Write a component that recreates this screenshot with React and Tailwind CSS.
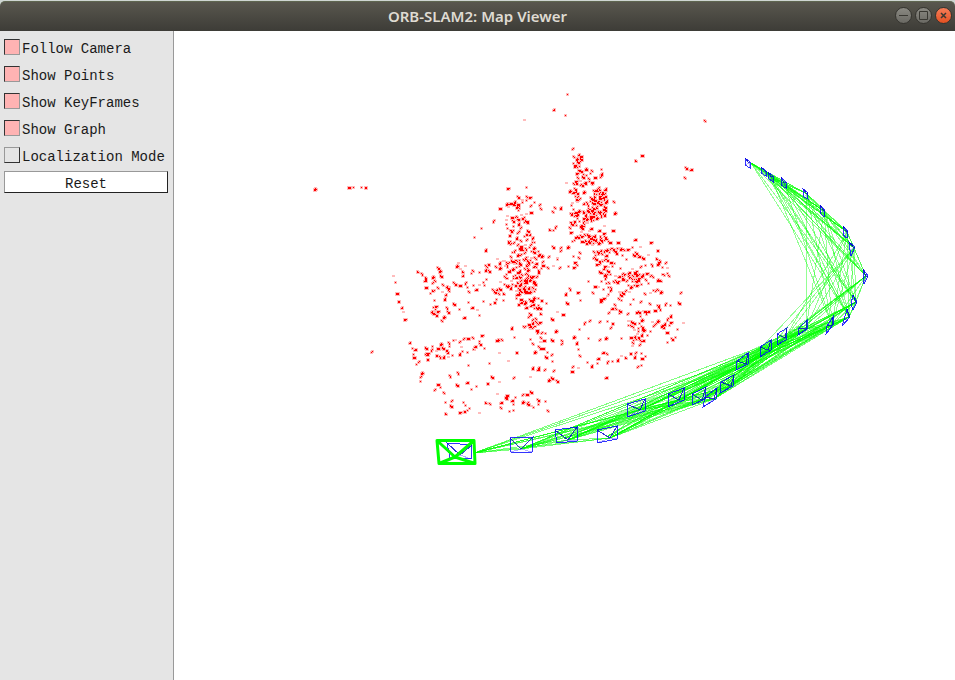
import React, { useState } from "react";

// Small repeatable generator so that the cloud looks the same on each render.
function makeRandom(seed) {
  let s = seed;
  return () => {
    s = (s * 1664525 + 1013904223) % 4294967296;
    return s / 4294967296;
  };
}

// Isolated landmarks, x and y in turn.
const LANDMARKS = [
  393,276,395,282,397,293,398,301,402,307,403,312,404,319,417,271,422,274,425,280,426,287,432,277,432,283,
  434,290,430,293,434,300,433,307,435,312,436,315,442,321,443,317,448,312,447,308,454,304,459,309,464,317,
  468,302,472,307,477,310,479,315,483,301,490,304,494,302,496,299,503,300,438,268,439,271,441,276,443,285,
  442,292,449,287,448,290,446,295,444,299,455,284,453,282,456,266,458,263,460,269,463,275,465,266,471,273,
  465,283,467,287,468,291,473,285,476,289,479,285,483,282,484,285,479,272,485,270,487,267,485,250,490,272,
  497,259,499,263,493,290,497,289,507,265,410,342,412,348,415,349,413,354,414,357,418,362,416,364,421,373,
  420,377,420,381,426,348,426,355,427,360,432,346,431,350,436,355,436,351,440,344,440,357,443,348,446,350,
  443,357,449,343,448,357,452,355,455,340,459,354,460,341,461,347,462,351,464,338,468,338,467,352,472,337,
  474,350,475,346,479,341,481,335,480,344,484,348,497,340,501,339,499,353,511,328,514,337,516,352,508,361,
  524,327,468,365,458,373,450,376,489,363,492,377,457,385,467,382,476,386,471,389,487,383,499,382,513,378,
  530,377,533,369,538,369,438,384,440,387,434,390,444,393,445,402,445,413,452,400,451,406,459,412,463,402,
  465,405,469,408,467,410,464,411,479,413,485,402,490,404,497,394,501,402,500,407,505,397,507,398,512,400,
  513,404,509,411,513,410,522,402,523,394,527,394,531,392,528,402,531,406,538,404,548,411,545,401,538,400,
  595,286,598,287,608,287,611,288,604,275,605,278,610,274,601,281,651,275,653,277,657,280,662,274,661,281,
  667,273,668,275,657,289,653,290,645,294,650,293,681,292,679,303,670,305,670,316,667,319,683,323,677,329,
  675,337,672,339,667,342,660,309,655,310,648,311,645,311,643,311,639,312,636,313,607,296,603,298,600,301,
  618,298,621,295,623,293,612,308,615,305,615,308,620,311,628,313,628,321,632,322,628,325,631,326,638,328,
  637,334,635,338,633,343,639,345,632,346,638,337,639,323,652,322,653,326,657,321,661,326,663,325,647,335,
  650,331,612,323,611,327,607,321,621,338,621,356,634,357,642,358,645,356,638,366,641,365,630,353,625,357,
  617,360,612,361,607,362,597,363,591,366,587,362,598,358,606,377,603,352,607,354,599,340,605,338,588,338,
  579,329,584,323,589,321,599,322,573,337,576,343,578,349,580,356,572,367,572,371,578,368,561,340,562,343,
  555,331,552,340,551,355,552,361,554,370,557,381,552,378,548,380,538,368,532,368,534,352,540,348,532,343,
  530,339,538,332,545,333,533,327,532,323,533,319,530,314,524,327,552,319,557,312,546,303,565,294,570,289,
  577,292,580,300,567,303,563,314,593,293,588,281,568,266,573,267,577,265,560,267,553,266,547,267,538,298,
  538,305,540,308,514,337,497,340,573,148,579,154,507,188,526,187,527,197,514,202,500,208,493,221,534,202,
  541,209,539,205,553,212,555,208,560,208,549,229,555,227,553,230,553,247,548,257,613,201,614,213,613,230,
  601,169,601,174,610,242,618,242,610,249,613,249,617,248,620,248,623,249,627,249,632,247,640,247,635,239,
  650,242,622,255,626,259,634,255,638,257,643,258,648,255,656,258,660,261,665,263,641,266,645,265,662,267,
  667,268,620,268,612,266,632,269,614,263,567,94,554,109,565,115,524,120,705,121,314,189,349,187,353,187,
  361,187,365,187,371,352,642,155,635,160,686,168,691,169,685,178,481,228,474,237,544,340,547,352,669,325,
];

// Dense parts of the cloud: centre, half extents, count.
const CLUSTERS = [
  [578, 161, 5, 7, 13], [584, 177, 9, 8, 22], [596, 180, 5, 12, 9], [576, 187, 11, 6, 14],
  [600, 193, 8, 6, 22], [597, 205, 10, 8, 38], [579, 204, 10, 9, 16], [579, 219, 9, 8, 30],
  [597, 216, 8, 5, 18], [581, 235, 14, 8, 26], [598, 237, 8, 11, 22], [599, 256, 7, 8, 16],
  [570, 256, 16, 9, 10], [512, 214, 6, 12, 15], [523, 205, 9, 9, 12], [521, 221, 9, 10, 16],
  [510, 235, 4, 9, 12], [525, 241, 9, 11, 26], [521, 258, 11, 10, 28], [528, 270, 11, 13, 28],
  [511, 269, 9, 10, 20], [520, 284, 10, 10, 28], [531, 283, 7, 10, 15], [525, 299, 9, 9, 22],
  [532, 315, 6, 11, 15], [534, 328, 5, 8, 8], [537, 259, 6, 9, 12], [503, 289, 8, 8, 9],
  [625, 277, 9, 5, 18], [635, 279, 8, 7, 20], [605, 267, 10, 10, 12], [611, 287, 9, 7, 8],
  [636, 293, 16, 12, 10], [649, 275, 18, 13, 10], [613, 249, 15, 7, 8], [643, 257, 16, 8, 5],
  [636, 325, 7, 13, 12], [639, 344, 6, 10, 8], [658, 298, 12, 9, 5], [655, 323, 18, 12, 6],
  [430, 284, 7, 7, 4], [435, 309, 4, 7, 5], [443, 288, 8, 6, 5], [473, 277, 18, 10, 4],
  [498, 270, 14, 12, 8], [432, 353, 8, 6, 4], [462, 346, 15, 7, 4], [610, 312, 12, 22, 3],
  [550, 320, 12, 30, 5], [520, 401, 15, 7, 4], [545, 350, 10, 25, 4], [665, 335, 14, 12, 2],
];

function buildCloud() {
  const rnd = makeRandom(2017);
  const halo = [];
  const core = [];
  const put = (x, y, w, h) => {
    halo.push(`M${x - 1} ${y - 1}h${w + 2}v${h + 2}h-${w + 2}z`);
    core.push(`M${x} ${y}h${w}v${h}h-${w}z`);
  };
  const dot = (x, y) => {
    const kind = rnd();
    if (kind < 0.1) {
      halo.push(`M${x - 1} ${y - 1}h3v2h-3z`);
      return;
    }
    if (kind < 0.38) {
      put(x, y, 1, 1);
      return;
    }
    put(x, y, kind > 0.65 ? 2 : 1, kind > 0.55 ? 2 : 1);
    const dx = rnd() < 0.5 ? -1 : 1;
    const dy = rnd() < 0.5 ? -1 : 1;
    put(x + dx, y + dy, 1, 1);
    if (kind > 0.8) put(x + dx, y, 2, 1);
  };
  for (let i = 0; i < LANDMARKS.length; i += 2) dot(LANDMARKS[i], LANDMARKS[i + 1]);
  for (const [cx, cy, rx, ry, n] of CLUSTERS) {
    for (let i = 0; i < n; i++) {
      dot(Math.round(cx + (rnd() * 2 - 1) * rx), Math.round(cy + (rnd() * 2 - 1) * ry));
    }
  }
  return { halo: halo.join(""), core: core.join("") };
}

// Key frames: top left, top right, bottom right, bottom left, then the optical centre.
const KEYFRAMES = [
  [745,158, 750,162, 750,168, 745,165, 749,163],
  [761,167, 766,171, 766,176, 761,173, 765,171],
  [768,172, 773,176, 773,182, 768,178, 771,177],
  [781,177, 786,182, 786,188, 781,185, 784,183],
  [803,189, 807,192, 808,199, 804,197, 807,194],
  [820,205, 825,210, 824,217, 820,213, 824,211],
  [843,226, 848,231, 847,238, 843,235, 847,232],
  [849,242, 855,247, 851,256, 850,250, 854,248],
  [863,269, 868,276, 864,284, 863,278, 866,276],
  [853,295, 857,302, 853,310, 851,304, 856,302],
  [847,309, 850,317, 842,326, 844,320, 849,317],
  [827,326, 833,317, 833,325, 826,334, 832,325],
  [799,328, 807,320, 807,329, 798,335, 806,329],
  [777,334, 787,328, 786,340, 777,345, 785,338],
  [760,347, 771,340, 771,350, 760,357, 768,350],
  [737,361, 748,353, 748,364, 736,370, 746,364],
  [721,382, 734,375, 733,386, 720,393, 731,386],
  [705,397, 717,388, 716,399, 703,407, 714,399],
  [692,394, 706,387, 705,399, 692,405, 702,400],
  [668,394, 684,388, 684,400, 668,407, 679,400],
  [627,404, 645,399, 645,411, 627,417, 640,410],
  [597,430, 617,426, 617,439, 597,443, 610,438],
  [555,430, 577,427, 577,441, 557,443, 568,440],
  [510,438, 533,437, 532,452, 511,452, 521,449],
  [447,443, 472,445, 471,459, 450,458, 460,455],
];

// Last key frame that each of the first ones shares points with.
const LAST_SHARED = [10, 10, 11, 11, 12, 12, 13, 15, 18];

function buildEdges() {
  const edges = [];
  KEYFRAMES.forEach((a, i) => {
    const last = i < LAST_SHARED.length ? LAST_SHARED[i] : i + 11;
    for (let j = i + 1; j <= Math.min(last, KEYFRAMES.length - 1); j++) {
      const b = KEYFRAMES[j];
      const x2 = j === 24 ? 474 : b[8];
      const y2 = j === 24 ? 453 : b[9];
      edges.push({
        d: `M${i === 0 ? a[8] + 2 : a[8]} ${a[9]}L${x2} ${y2}`,
        opacity: i < 9 && j > 7 ? 0.42 : 0.5,
      });
      if (i >= 11 && j < 23 && (i + j) % 2 === 0) {
        edges.push({ d: `M${a[8] - 3} ${a[9] - 3}L${x2 - 4} ${y2 - 1}`, opacity: 0.35 });
      }
    }
  });
  return edges;
}

const CLOUD = buildCloud();
const EDGES = buildEdges();

function KeyFrame({ frame }) {
  const [ax, ay, bx, by, cx, cy, dx, dy, ox, oy] = frame;
  return (
    <g>
      <path d={`M${ax} ${ay}L${bx} ${by}L${cx} ${cy}L${dx} ${dy}Z`} stroke="#0000ff" strokeOpacity="0.8" />
      <path d={`M${ax} ${ay}L${ox} ${oy}L${bx} ${by}`} stroke="#0000cc" strokeOpacity="0.8" />
      <path d={`M${dx} ${dy}L${ox} ${oy}L${cx} ${cy}`} stroke="#0000ff" strokeOpacity="0.3" />
    </g>
  );
}

function MapView({ points, keyFrames, graph }) {
  return (
    <svg
      viewBox="174 31 781 649"
      preserveAspectRatio="xMinYMin meet"
      className="block h-full w-full"
      fill="none"
      role="img"
      aria-label="Map"
    >
      {points && (
        <g shapeRendering="crispEdges">
          <path d={CLOUD.halo} fill="#ffbcbc" />
          <path d={CLOUD.core} fill="#ff0000" />
        </g>
      )}
      {graph && (
        <g stroke="#00ff00" strokeWidth="1" shapeRendering="crispEdges">
          {EDGES.map((e) => (
            <path key={e.d} d={e.d} strokeOpacity={e.opacity} />
          ))}
        </g>
      )}
      {keyFrames && (
        <g strokeWidth="1" shapeRendering="crispEdges">
          {KEYFRAMES.map((f) => <KeyFrame key={f.join()} frame={f} />)}
        </g>
      )}
      <path
        d="M437 440.500H474L475 463.500H439ZM437 440.500L455 457L474 440.500M439 463.500L455 457L475 463.500"
        stroke="#00ff00"
        strokeWidth="3"
        strokeLinejoin="round"
      />
    </svg>
  );
}

function Toggle({ label, checked, onChange }) {
  return (
    <label className="flex h-[27px] items-center gap-[2px]">
      <input
        type="checkbox"
        checked={checked}
        onChange={(e) => onChange(e.target.checked)}
        className="size-4 shrink-0 appearance-none border border-t-[#999999] border-r-[#333333] border-b-[#333333] border-l-[#999999] checked:border-t-[#333333] checked:border-r-[#999999] checked:border-b-[#999999] checked:border-l-[#333333] checked:bg-[#ffb3b3]"
      />
      <span className="whitespace-nowrap pt-[5px]">{label}</span>
    </label>
  );
}

function WindowButton({ label, close, children }) {
  return (
    <button
      type="button"
      aria-label={label}
      className={
        close
          ? "flex size-[17px] items-center justify-center rounded-full border border-[#35342f] bg-linear-to-b from-[#f57d57] to-[#e3501f]"
          : "flex size-[17px] items-center justify-center rounded-full border border-[#35342f] bg-linear-to-b from-[#8a8982] to-[#6a6963]"
      }
    >
      <svg viewBox="0 0 9 9" className="size-[9px] shrink-0" fill="none" stroke="#393832" strokeWidth="1">
        {children}
      </svg>
    </button>
  );
}

export default function App() {
  const [follow, setFollow] = useState(true);
  const [points, setPoints] = useState(true);
  const [keyFrames, setKeyFrames] = useState(true);
  const [graph, setGraph] = useState(true);
  const [localize, setLocalize] = useState(false);

  return (
    <div className="flex h-screen flex-col bg-white">
      <header className="shrink-0 bg-[#cfd6d2] pt-px">
        <div className="grid h-[30px] grid-cols-[1fr_auto_1fr] items-center rounded-t-[5px] border-t border-[#5f6650] bg-linear-to-b from-[#59574e] to-[#3d3c37] pr-[3px] pb-[2px]">
          <h1 className="col-start-2 pl-[3px] font-['Noto_Sans',sans-serif] text-[15px] leading-5 font-semibold text-[#dfdbd2]">
            ORB-SLAM2: Map Viewer
          </h1>
          <div className="flex justify-end gap-[3px]">
            <WindowButton label="Minimize"><path d="M0 4.500H9" /></WindowButton>
            <WindowButton label="Maximize"><path d="M0.500 0.500H8.500V8.500H0.500Z" /></WindowButton>
            <WindowButton label="Close" close><path d="M2 2L7 7M7 2L2 7" strokeWidth="1.500" /></WindowButton>
          </div>
        </div>
      </header>
      <div className="flex min-h-0 flex-1">
        <aside className="w-[174px] shrink-0 border-r border-[#999999] bg-[#e5e5e5] px-1 pt-[2px] font-['Liberation_Mono',monospace] text-[14px] leading-4 text-[#1a1a1a]">
          <Toggle label="Follow Camera" checked={follow} onChange={setFollow} />
          <Toggle label="Show Points" checked={points} onChange={setPoints} />
          <Toggle label="Show KeyFrames" checked={keyFrames} onChange={setKeyFrames} />
          <Toggle label="Show Graph" checked={graph} onChange={setGraph} />
          <Toggle label="Localization Mode" checked={localize} onChange={setLocalize} />
          <div className="pt-[3px] pr-[1px]">
            <button
              type="button"
              className="block h-[22px] w-full border border-t-[#999999] border-r-[#222222] border-b-[#222222] border-l-[#999999] bg-white pt-[3px]"
            >
              Reset
            </button>
          </div>
        </aside>
        <main className="min-w-0 flex-1 bg-white">
          <MapView points={points} keyFrames={keyFrames} graph={graph} />
        </main>
      </div>
    </div>
  );
}
